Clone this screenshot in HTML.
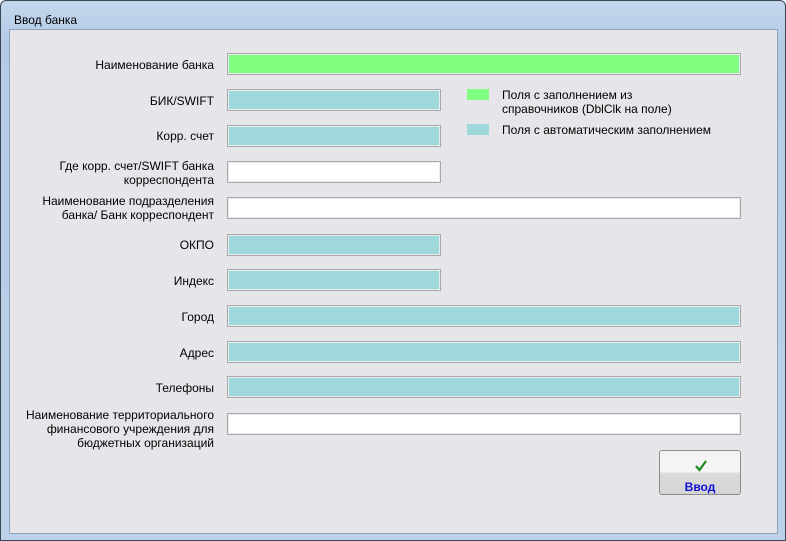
<!DOCTYPE html>
<html><head><meta charset="utf-8"><style>
body{margin:0;width:786px;height:541px;overflow:hidden;font-family:"Liberation Sans",sans-serif;font-size:12px;background:#fff}
.win{position:absolute;left:0;top:0;width:784px;height:539px;border:1px solid #3c4652;border-radius:6px 6px 0 0;background:linear-gradient(#c3d6ec,#b4cbe6 40px,#bcd2ea);}
.title{position:absolute;left:13px;top:12px;color:#000;font-size:12px}
.client{position:absolute;left:9px;top:29px;width:767px;height:503px;background:#e6e5e9;border:1px solid #8fa2ba}
.f{position:absolute;height:20px;border:1px solid #a8a8a8;box-shadow:inset 0 0 0 1px #e8eef0;box-sizing:border-box;height:22px}
.g{background:#80fe80}.c{background:#9fd8da}.w{background:#fff}
.l{position:absolute;right:572px;text-align:right;line-height:14px;color:#000}
.b{position:absolute;width:22px;height:11px}
.btn{position:absolute;left:659px;top:450px;width:82px;height:45px;border:1px solid #8c8c8c;border-radius:3px;background:linear-gradient(#f4f4f4 50%,#dcdcdc 50%,#d4d4d4);box-sizing:border-box;text-align:center}
</style></head><body>
<div class="win"><div class="title">Ввод банка</div></div>
<div class="client"></div>
<div class="l" style="top:58px">Наименование банка</div>
<div class="f g" style="left:227px;top:53px;width:514px"></div>
<div class="l" style="top:94px">БИК/SWIFT</div>
<div class="f c" style="left:227px;top:89px;width:214px"></div>
<div class="l" style="top:129px">Корр. счет</div>
<div class="f c" style="left:227px;top:125px;width:214px"></div>
<div class="l" style="top:159px">Где корр. счет/SWIFT банка<br>корреспондента</div>
<div class="f w" style="left:227px;top:161px;width:214px"></div>
<div class="l" style="top:194px">Наименование подразделения<br>банка/ Банк корреспондент</div>
<div class="f w" style="left:227px;top:197px;width:514px"></div>
<div class="l" style="top:238px">ОКПО</div>
<div class="f c" style="left:227px;top:234px;width:214px"></div>
<div class="l" style="top:274px">Индекс</div>
<div class="f c" style="left:227px;top:269px;width:214px"></div>
<div class="l" style="top:310px">Город</div>
<div class="f c" style="left:227px;top:305px;width:514px"></div>
<div class="l" style="top:346px">Адрес</div>
<div class="f c" style="left:227px;top:341px;width:514px"></div>
<div class="l" style="top:381px">Телефоны</div>
<div class="f c" style="left:227px;top:376px;width:514px"></div>
<div class="l" style="top:408px">Наименование территориального<br>финансового учреждения для<br>бюджетных организаций</div>
<div class="f w" style="left:227px;top:413px;width:514px"></div>
<div class="b g" style="left:467px;top:89px"></div>
<div style="position:absolute;left:502px;top:88px;line-height:14px">Поля с заполнением из<br>справочников (DblClk на поле)</div>
<div class="b c" style="left:467px;top:124px"></div>
<div style="position:absolute;left:502px;top:123px">Поля с автоматическим заполнением</div>
<div class="btn"><svg width="14" height="12" style="position:absolute;left:34px;top:9px"><path d="M2 6 L5.5 10 L12 1" stroke="#1a8a1a" stroke-width="2.2" fill="none"/></svg><div style="position:absolute;left:0;right:0;top:29px;color:#1010d0;font-weight:bold;font-size:12px">Ввод</div></div>
</body></html>
